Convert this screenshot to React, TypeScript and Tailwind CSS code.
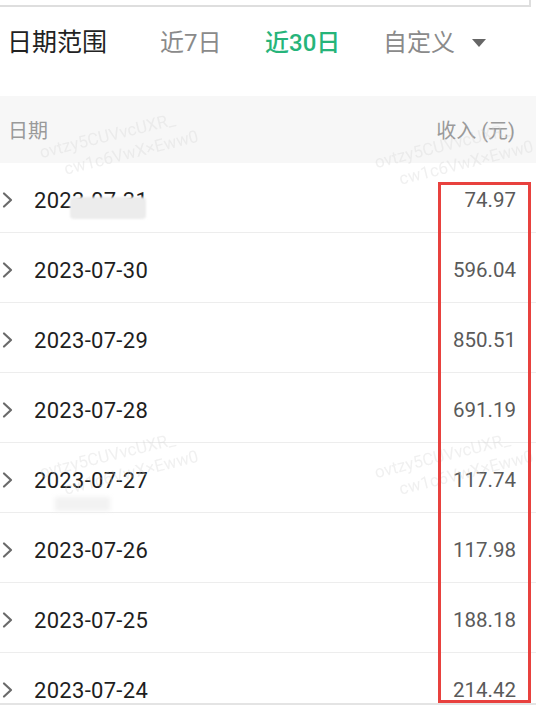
import React from "react";

const rows = [
  { d: "2023-07-31", v: "74.97" },
  { d: "2023-07-30", v: "596.04" },
  { d: "2023-07-29", v: "850.51" },
  { d: "2023-07-28", v: "691.19" },
  { d: "2023-07-27", v: "117.74" },
  { d: "2023-07-26", v: "117.98" },
  { d: "2023-07-25", v: "188.18" },
  { d: "2023-07-24", v: "214.42" },
];

function Chevron() {
  return (
    <svg width="14" height="18" viewBox="0 0 14 18" className="shrink-0">
      <path d="M4 2.5 L11 9 L4 15.5" fill="none" stroke="#6a6a6a" strokeWidth="2.2" strokeLinecap="round" strokeLinejoin="round" />
    </svg>
  );
}

function Watermark({ className }: { className: string }) {
  return (
    <div className={`pointer-events-none absolute -rotate-[14deg] text-[17px] leading-[22px] text-[#d0d0d0] opacity-30 ${className}`}>
      <div>ovtzy5CUVvcUXR_</div>
      <div className="pl-[20px]">cw1c6VwX×Eww0</div>
    </div>
  );
}

export default function App() {
  return (
    <div
      className="relative h-[707px] w-[536px] overflow-hidden bg-white"
      style={{ fontFamily: 'Roboto, "Noto Sans CJK SC", sans-serif' }}
    >
      <div className="h-[7px] w-[531px] border-b-2 border-r-2 border-[#dedede]" />
      <div className="flex h-[72px] items-center pl-[7px] text-[25px]">
        <span className="w-[153px] text-[#222]">日期范围</span>
        <span className="w-[105px] text-[24px] text-[#8a8a8a]">近7日</span>
        <span className="w-[118px] text-[24px] font-medium text-[#26b47a]">近30日</span>
        <span className="text-[24px] text-[#8a8a8a]">自定义</span>
        <svg width="16" height="10" viewBox="0 0 16 10" className="ml-[16px]">
          <path d="M1 1 L15 1 L8 9 Z" fill="#666" />
        </svg>
      </div>
      <div className="h-[17px]" />
      <div className="flex h-[67px] items-center justify-between bg-[#f7f7f7] pl-[8px] pr-[21px] pt-[3px] text-[20px] text-[#9a9a9a]">
        <span>日期</span>
        <span>收入 (元)</span>
      </div>
      {rows.map((r) => (
        <div
          key={r.d}
          className="flex h-[70px] items-center justify-between border-b border-[#ededed] pr-[20px] pt-[5px]"
        >
          <div className="flex items-center gap-[20px]">
            <Chevron />
            <span className="text-[22px] tracking-[0.3px] text-[#1e1e1e]">{r.d}</span>
          </div>
          <span className="text-[20.5px] text-[#5a5a5a]">{r.v}</span>
        </div>
      ))}
      <div className="absolute left-0 top-[703px] h-[2px] w-[536px] bg-[#e4e4e4]" />

      <Watermark className="left-[40px] top-[122px]" />
      <Watermark className="left-[375px] top-[132px]" />
      <Watermark className="left-[40px] top-[442px]" />
      <Watermark className="left-[375px] top-[442px]" />

      <div className="absolute left-[70px] top-[197px] h-[22px] w-[76px] rounded-sm bg-[#ececec] blur-[1px]" />
      <div className="absolute left-[55px] top-[497px] h-[14px] w-[55px] bg-[#f2f2f2] blur-[2px]" />

      <div className="absolute left-[438px] top-[182px] h-[521px] w-[93px] border-[3px] border-[#e8413e]" />
    </div>
  );
}
